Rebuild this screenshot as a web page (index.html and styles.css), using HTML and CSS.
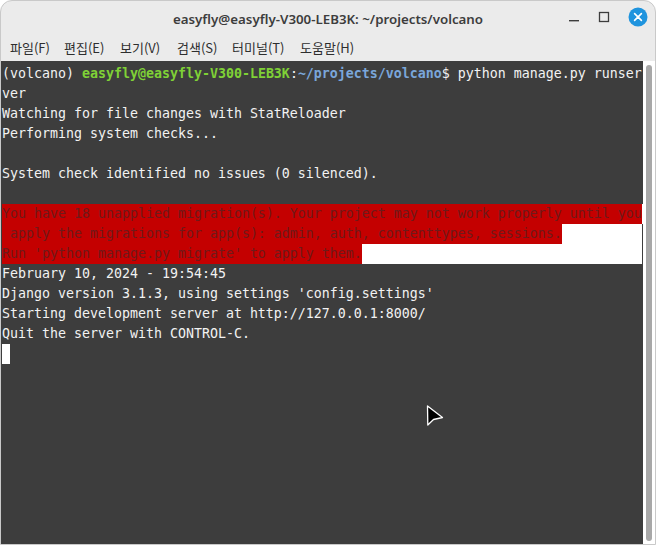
FILE: index.html
```html
<!DOCTYPE html>
<html lang="ko">
<head>
<meta charset="utf-8">
<title>easyfly@easyfly-V300-LEB3K: ~/projects/volcano</title>
<link rel="stylesheet" href="styles.css">
</head>
<body>
<div class="window">
  <div class="titlebar">
    <div class="title">easyfly@easyfly-V300-LEB3K: ~/projects/volcano</div>
    <div class="controls">
      <span class="ctl min"><svg width="12" height="12" viewBox="0 0 12 12"><rect x="1" y="9" width="10" height="1.4" fill="#3d3d3d"/></svg></span>
      <span class="ctl max"><svg width="12" height="12" viewBox="0 0 12 12"><rect x="1.5" y="1.5" width="9" height="9" fill="none" stroke="#3d3d3d" stroke-width="1.3"/></svg></span>
      <span class="ctl close"><svg width="20" height="20" viewBox="0 0 20 20"><circle cx="10" cy="10" r="9.5" fill="#1f94de"/><path d="M6.6 6.6 L13.4 13.4 M13.4 6.6 L6.6 13.4" stroke="#fff" stroke-width="1.6" stroke-linecap="round"/></svg></span>
    </div>
  </div>
  <div class="menubar">
    <span class="menu m1">파일(F)</span>
    <span class="menu m2">편집(E)</span>
    <span class="menu m3">보기(V)</span>
    <span class="menu m4">검색(S)</span>
    <span class="menu m5">터미널(T)</span>
    <span class="menu m6">도움말(H)</span>
  </div>
  <div class="term">
    <div class="screen">
      <div class="line">(volcano) <b class="g">easyfly@easyfly-V300-LEB3K</b>:<b class="bl">~/projects/volcano</b>$ python manage.py runser</div>
      <div class="line">ver</div>
      <div class="line">Watching for file changes with StatReloader</div>
      <div class="line">Performing system checks...</div>
      <div class="line"> </div>
      <div class="line">System check identified no issues (0 silenced).</div>
      <div class="line"> </div>
      <div class="line"><span class="err">You have 18 unapplied migration(s). Your project may not work properly until you</span><span class="fill"></span></div>
      <div class="line"><span class="err"> apply the migrations for app(s): admin, auth, contenttypes, sessions.</span><span class="fill"></span></div>
      <div class="line"><span class="err">Run 'python manage.py migrate' to apply them.</span><span class="fill"></span></div>
      <div class="line">February 10, 2024 - 19:54:45</div>
      <div class="line">Django version 3.1.3, using settings 'config.settings'</div>
      <div class="line">Starting development server at http://127.0.0.1:8000/</div>
      <div class="line">Quit the server with CONTROL-C.</div>
      <div class="line"><span class="cursor"></span></div>
      <svg class="pointer" width="20" height="24" viewBox="0 0 20 24"><path d="M2.5 2 L2.8 21 L8.5 15.5 L17.5 13.5 Z" fill="#000000" stroke="#ffffff" stroke-width="1.3" stroke-linejoin="round"/></svg>
    </div>
    <div class="scrollbar"><div class="thumb"></div></div>
  </div>
</div>
</body>
</html>
```
FILE: styles.css
```css
html, body {
  margin: 0;
  padding: 0;
  background: #ffffff;
}
.window {
  width: 656px;
  height: 545px;
  box-sizing: border-box;
  display: flex;
  flex-direction: column;
  background: #ebebeb;
  border: 1px solid #c9c9c9;
  border-radius: 12px 12px 0 0;
  overflow: hidden;
}
.titlebar {
  height: 34px;
  flex: none;
  position: relative;
  display: flex;
  align-items: center;
  justify-content: center;
}
.title {
  font-family: "Noto Sans", sans-serif;
  font-weight: 600;
  font-size: 13.3px;
  color: #3d3d3d;
  padding-top: 1px;
}
.controls {
  position: absolute;
  right: 7px;
  top: 6px;
  display: flex;
  align-items: center;
}
.ctl {
  display: flex;
  align-items: center;
  justify-content: center;
}
.min { width: 12px; margin-right: 18px; }
.max { width: 12px; margin-right: 18px; }
.close { width: 20px; }
.menubar {
  height: 26px;
  flex: none;
  display: flex;
  align-items: center;
  padding-left: 9px;
  padding-bottom: 2px;
  box-sizing: border-box;
  font-family: "Noto Sans CJK KR", "Noto Sans", sans-serif;
  font-size: 13px;
  color: #2e2e2e;
}
.menu { flex: none; }
.m1 { width: 54px; }
.m2 { width: 56px; }
.m3 { width: 57px; }
.m4 { width: 55px; }
.m5 { width: 68px; }
.term {
  flex: 1;
  display: flex;
  background: #ffffff;
  min-height: 0;
}
.screen {
  position: relative;
  width: 642px;
  flex: none;
  box-sizing: border-box;
  background: #3d3d3d;
  padding: 3px 0 0 1px;
  font-family: "DejaVu Sans Mono", monospace;
  font-size: 13.29px;
  color: #f2f2f2;
}
.line {
  display: flex;
  height: 20px;
  line-height: 20px;
  white-space: pre;
  width: 640px;
}
.g { color: #7fd136; font-weight: bold; }
.bl { color: #7aa6da; font-weight: bold; }
.err {
  background: #c40000;
  color: #6e1a1a;
}
.fill {
  flex: 1;
  background: #ffffff;
}
.cursor {
  display: inline-block;
  width: 8px;
  height: 20px;
  background: #ffffff;
}
.pointer {
  position: absolute;
  left: 424px;
  top: 343px;
}
.scrollbar {
  flex: 1;
  box-sizing: border-box;
  padding: 4px 3px 3px 3px;
  display: flex;
  background: #ffffff;
}
.thumb {
  flex: 1;
  background: #a8a8a8;
  border-radius: 3px;
}
```
